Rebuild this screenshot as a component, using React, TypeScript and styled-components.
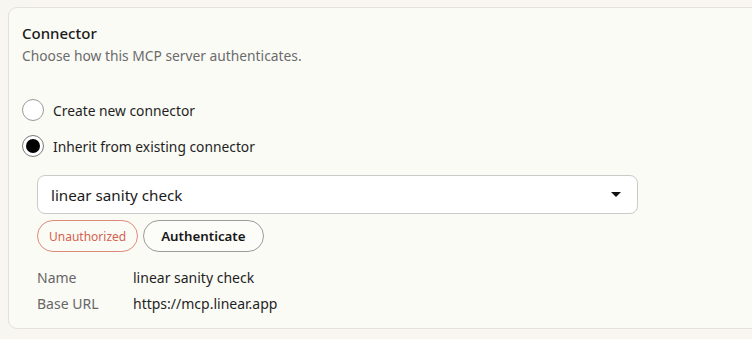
import React from "react";
import styled, { createGlobalStyle } from "styled-components";

const GlobalStyle = createGlobalStyle`
  html, body {
    margin: 0;
    padding: 0;
    background: #f7f6f0;
    overflow: hidden;
  }
  body {
    font-family: "Noto Sans", "Open Sans", sans-serif;
    color: #1f1f1f;
  }
`;

const Page = styled.div`
  padding: 7px 0 0 8px;
  overflow: hidden;
  width: 752px;
  height: 339px;
  box-sizing: border-box;
`;

const Card = styled.section`
  width: 780px;
  height: 322px;
  box-sizing: border-box;
  background: #fbfbf6;
  border: 1px solid #e3e1d8;
  border-radius: 9px;
  padding: 14px 0 0 13px;
  display: flex;
  flex-direction: column;
`;

const Title = styled.h2`
  margin: 0;
  font-size: 15px;
  font-weight: 500;
  line-height: 22px;
  color: #1a1a1a;
`;

const Subtitle = styled.p`
  margin: 2px 0 0;
  font-size: 13.8px;
  line-height: 20px;
  color: #6b6b6b;
`;

const RadioGroup = styled.div`
  display: flex;
  flex-direction: column;
  gap: 12px;
  margin-top: 32px;
`;

const RadioRow = styled.label`
  display: flex;
  align-items: center;
  gap: 9px;
  font-size: 13.8px;
  color: #1f1f1f;
  height: 24px;
`;

const RadioCircle = styled.span<{ $checked?: boolean }>`
  width: 22px;
  height: 22px;
  box-sizing: border-box;
  border-radius: 50%;
  border: 1px solid ${(p) => (p.$checked ? "#7a7a7a" : "#9a9a9a")};
  background: #fff;
  display: flex;
  align-items: center;
  justify-content: center;
  &::after {
    content: "";
    display: ${(p) => (p.$checked ? "block" : "none")};
    width: 14px;
    height: 14px;
    border-radius: 50%;
    background: #000;
  }
`;

const Indented = styled.div`
  padding-left: 15px;
  display: flex;
  flex-direction: column;
`;

const SelectBox = styled.div`
  margin-top: 17px;
  width: 601px;
  height: 39px;
  box-sizing: border-box;
  background: #fff;
  border: 1px solid #cacaca;
  border-radius: 8px;
  display: flex;
  align-items: center;
  justify-content: space-between;
  padding: 0 16px 0 13px;
  font-size: 15.2px;
  color: #1a1a1a;
`;

const Caret = styled.span`
  width: 0;
  height: 0;
  border-left: 5px solid transparent;
  border-right: 5px solid transparent;
  border-top: 5px solid #111;
`;

const BadgeRow = styled.div`
  display: flex;
  gap: 5px;
  margin-top: 6px;
`;

const Pill = styled.span<{ $variant: "danger" | "neutral" }>`
  height: 32px;
  box-sizing: border-box;
  display: inline-flex;
  align-items: center;
  border-radius: 16px;
  padding: 0 ${(p) => (p.$variant === "danger" ? "11px" : "17px")};
  font-size: ${(p) => (p.$variant === "danger" ? "12px" : "13.3px")};
  font-weight: ${(p) => (p.$variant === "danger" ? 400 : 600)};
  color: ${(p) => (p.$variant === "danger" ? "#d4614f" : "#161616")};
  border: 1px solid ${(p) => (p.$variant === "danger" ? "#e08a7c" : "#9c9c9c")};
  background: ${(p) => (p.$variant === "danger" ? "transparent" : "#fcfcf8")};
`;

const Details = styled.dl`
  margin: 16px 0 0;
  display: grid;
  grid-template-columns: 96px auto;
  row-gap: 6px;
  font-size: 14px;
  line-height: 20px;
`;

const Term = styled.dt`
  color: #666;
  margin: 0;
`;

const Value = styled.dd`
  color: #1f1f1f;
  margin: 0;
`;

export default function App() {
  return (
    <>
      <GlobalStyle />
      <Page>
        <Card>
          <Title>Connector</Title>
          <Subtitle>Choose how this MCP server authenticates.</Subtitle>
          <RadioGroup>
            <RadioRow>
              <RadioCircle />
              Create new connector
            </RadioRow>
            <RadioRow>
              <RadioCircle $checked />
              Inherit from existing connector
            </RadioRow>
          </RadioGroup>
          <Indented>
            <SelectBox>
              linear sanity check
              <Caret />
            </SelectBox>
            <BadgeRow>
              <Pill $variant="danger">Unauthorized</Pill>
              <Pill $variant="neutral">Authenticate</Pill>
            </BadgeRow>
            <Details>
              <Term>Name</Term>
              <Value>linear sanity check</Value>
              <Term>Base URL</Term>
              <Value>https://mcp.linear.app</Value>
            </Details>
          </Indented>
        </Card>
      </Page>
    </>
  );
}
